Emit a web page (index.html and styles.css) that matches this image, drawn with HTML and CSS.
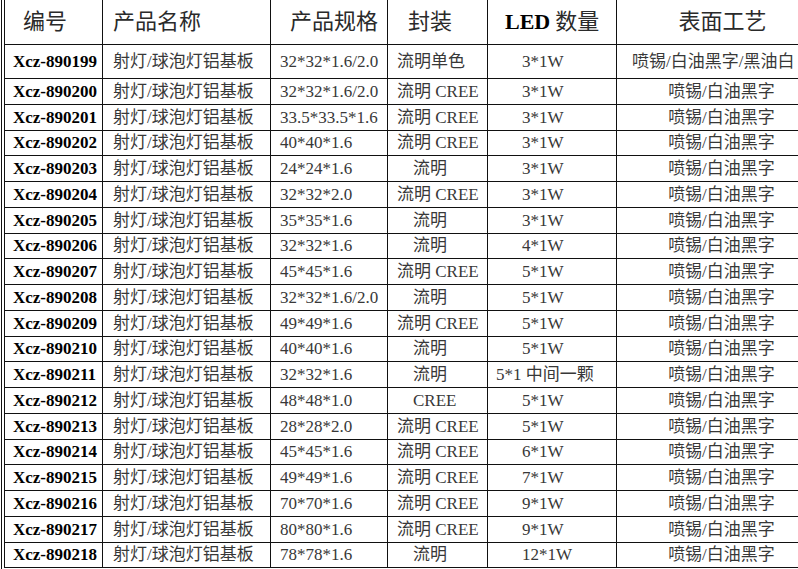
FILE: index.html
```html
<!DOCTYPE html>
<html lang="zh-CN">
<head>
<meta charset="utf-8">
<title>铝基板规格表</title>
<link rel="stylesheet" href="styles.css">
</head>
<body>
<div class="frame">
  <div class="sheet">
    <div class="h c1">编号</div>
    <div class="h c2">产品名称</div>
    <div class="h c3">产品规格</div>
    <div class="h c4">封装</div>
    <div class="h c5"><b>LED</b> 数量</div>
    <div class="h c6">表面工艺</div>

    <div class="d c1">Xcz-890199</div><div class="d c2">射灯/球泡灯铝基板</div><div class="d c3">32*32*1.6/2.0</div><div class="d c4">流明单色</div><div class="d c5">3*1W</div><div class="d c6 long">喷锡/白油黑字/黑油白</div>
    <div class="d c1">Xcz-890200</div><div class="d c2">射灯/球泡灯铝基板</div><div class="d c3">32*32*1.6/2.0</div><div class="d c4">流明 CREE</div><div class="d c5">3*1W</div><div class="d c6">喷锡/白油黑字</div>
    <div class="d c1">Xcz-890201</div><div class="d c2">射灯/球泡灯铝基板</div><div class="d c3">33.5*33.5*1.6</div><div class="d c4">流明 CREE</div><div class="d c5">3*1W</div><div class="d c6">喷锡/白油黑字</div>
    <div class="d c1">Xcz-890202</div><div class="d c2">射灯/球泡灯铝基板</div><div class="d c3">40*40*1.6</div><div class="d c4">流明 CREE</div><div class="d c5">3*1W</div><div class="d c6">喷锡/白油黑字</div>
    <div class="d c1">Xcz-890203</div><div class="d c2">射灯/球泡灯铝基板</div><div class="d c3">24*24*1.6</div><div class="d c4 ind">流明</div><div class="d c5">3*1W</div><div class="d c6">喷锡/白油黑字</div>
    <div class="d c1">Xcz-890204</div><div class="d c2">射灯/球泡灯铝基板</div><div class="d c3">32*32*2.0</div><div class="d c4">流明 CREE</div><div class="d c5">3*1W</div><div class="d c6">喷锡/白油黑字</div>
    <div class="d c1">Xcz-890205</div><div class="d c2">射灯/球泡灯铝基板</div><div class="d c3">35*35*1.6</div><div class="d c4 ind">流明</div><div class="d c5">3*1W</div><div class="d c6">喷锡/白油黑字</div>
    <div class="d c1">Xcz-890206</div><div class="d c2">射灯/球泡灯铝基板</div><div class="d c3">32*32*1.6</div><div class="d c4 ind">流明</div><div class="d c5">4*1W</div><div class="d c6">喷锡/白油黑字</div>
    <div class="d c1">Xcz-890207</div><div class="d c2">射灯/球泡灯铝基板</div><div class="d c3">45*45*1.6</div><div class="d c4">流明 CREE</div><div class="d c5">5*1W</div><div class="d c6">喷锡/白油黑字</div>
    <div class="d c1">Xcz-890208</div><div class="d c2">射灯/球泡灯铝基板</div><div class="d c3">32*32*1.6/2.0</div><div class="d c4 ind">流明</div><div class="d c5">5*1W</div><div class="d c6">喷锡/白油黑字</div>
    <div class="d c1">Xcz-890209</div><div class="d c2">射灯/球泡灯铝基板</div><div class="d c3">49*49*1.6</div><div class="d c4">流明 CREE</div><div class="d c5">5*1W</div><div class="d c6">喷锡/白油黑字</div>
    <div class="d c1">Xcz-890210</div><div class="d c2">射灯/球泡灯铝基板</div><div class="d c3">40*40*1.6</div><div class="d c4 ind">流明</div><div class="d c5">5*1W</div><div class="d c6">喷锡/白油黑字</div>
    <div class="d c1">Xcz-890211</div><div class="d c2">射灯/球泡灯铝基板</div><div class="d c3">32*32*1.6</div><div class="d c4 ind">流明</div><div class="d c5 wide">5*1 中间一颗</div><div class="d c6">喷锡/白油黑字</div>
    <div class="d c1">Xcz-890212</div><div class="d c2">射灯/球泡灯铝基板</div><div class="d c3">48*48*1.0</div><div class="d c4 ind">CREE</div><div class="d c5">5*1W</div><div class="d c6">喷锡/白油黑字</div>
    <div class="d c1">Xcz-890213</div><div class="d c2">射灯/球泡灯铝基板</div><div class="d c3">28*28*2.0</div><div class="d c4">流明 CREE</div><div class="d c5">5*1W</div><div class="d c6">喷锡/白油黑字</div>
    <div class="d c1">Xcz-890214</div><div class="d c2">射灯/球泡灯铝基板</div><div class="d c3">45*45*1.6</div><div class="d c4">流明 CREE</div><div class="d c5">6*1W</div><div class="d c6">喷锡/白油黑字</div>
    <div class="d c1">Xcz-890215</div><div class="d c2">射灯/球泡灯铝基板</div><div class="d c3">49*49*1.6</div><div class="d c4">流明 CREE</div><div class="d c5">7*1W</div><div class="d c6">喷锡/白油黑字</div>
    <div class="d c1">Xcz-890216</div><div class="d c2">射灯/球泡灯铝基板</div><div class="d c3">70*70*1.6</div><div class="d c4">流明 CREE</div><div class="d c5">9*1W</div><div class="d c6">喷锡/白油黑字</div>
    <div class="d c1">Xcz-890217</div><div class="d c2">射灯/球泡灯铝基板</div><div class="d c3">80*80*1.6</div><div class="d c4">流明 CREE</div><div class="d c5">9*1W</div><div class="d c6">喷锡/白油黑字</div>
    <div class="d c1">Xcz-890218</div><div class="d c2">射灯/球泡灯铝基板</div><div class="d c3">78*78*1.6</div><div class="d c4 ind">流明</div><div class="d c5">12*1W</div><div class="d c6">喷锡/白油黑字</div>
  </div>
</div>
</body>
</html>
```
FILE: styles.css
```css
html, body {
  margin: 0;
  padding: 0;
  background: #fff;
  overflow: hidden;
}
body {
  width: 798px;
  height: 569px;
  font-family: "Liberation Serif", "Noto Sans CJK SC", serif;
  color: #383838;
}
.frame {
  margin-left: 1px;
  border-left: 1px solid #111;
  padding-left: 2px;
  width: 794px;
  height: 569px;
  overflow: hidden;
}
.sheet {
  display: grid;
  grid-template-columns: 98px 168px 117px 100px 129px 210px;
  grid-template-rows: 45px 34px repeat(19, 25.75px);
  border-left: 1px solid #111;
  width: max-content;
}
.sheet > div {
  box-sizing: border-box;
  border-right: 1px solid #111;
  border-bottom: 1px solid #111;
  display: flex;
  align-items: center;
  white-space: nowrap;
  overflow: hidden;
  font-size: 17px;
  line-height: 1;
}
.h {
  font-size: 22px !important;
  color: #2a2a2a;
}
.h b {
  font-weight: 700;
  color: #000;
  margin-right: 5px;
}
.h.c1 { padding-left: 18px; }
.h.c2 { padding-left: 10px; }
.h.c3 { padding-left: 19px; }
.h.c4 { padding-left: 20px; }
.h.c5 { padding-left: 17px; }
.h.c6 { justify-content: center; padding-left: 2px; }

.d.c1 {
  padding-left: 8px;
  font-weight: 700;
  color: #000;
}
.d.c2 { padding-left: 10px; }
.d.c3 { padding-left: 9px; }
.d.c4 { padding-left: 9px; }
.d.c4.ind { padding-left: 25px; }
.d.c5 { padding-left: 34px; }
.d.c5.wide { padding-left: 8px; }
.d.c6 { justify-content: center; }
.d.c6.long { justify-content: flex-start; padding-left: 15px; }
```
